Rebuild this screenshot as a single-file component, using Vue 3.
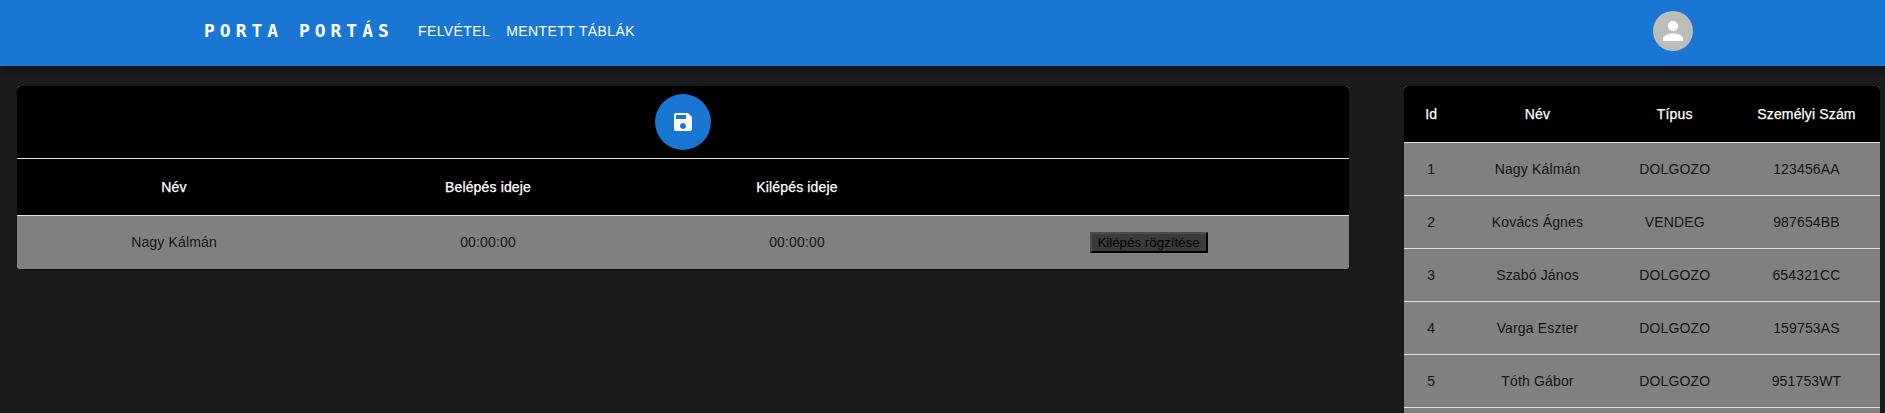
<script setup>
const pages = ['Felvétel', 'Mentett táblák']
const entries = [{ name: 'Nagy Kálmán', entered: '00:00:00', left: '00:00:00' }]
const people = [
  { id: 1, name: 'Nagy Kálmán', type: 'DOLGOZO', code: '123456AA' },
  { id: 2, name: 'Kovács Ágnes', type: 'VENDEG', code: '987654BB' },
  { id: 3, name: 'Szabó János', type: 'DOLGOZO', code: '654321CC' },
  { id: 4, name: 'Varga Eszter', type: 'DOLGOZO', code: '159753AS' },
  { id: 5, name: 'Tóth Gábor', type: 'DOLGOZO', code: '951753WT' },
]
</script>

<template>
  <div class="app">
    <header class="bar">
      <a class="brand">PORTA PORTÁS</a>
      <nav class="nav">
        <a v-for="p in pages" :key="p" class="link">{{ p }}</a>
      </nav>
      <button class="avatar" aria-label="Profil">
        <svg viewBox="0 0 24 24" width="30" height="30"><path d="M12 12c2.21 0 4-1.79 4-4s-1.79-4-4-4-4 1.79-4 4 1.79 4 4 4zm0 2c-2.67 0-8 1.34-8 4v2h16v-2c0-2.66-5.33-4-8-4z" /></svg>
      </button>
    </header>

    <main class="content">
      <section class="panel log">
        <div class="row tools">
          <button class="fab" aria-label="Mentés">
            <svg viewBox="0 0 24 24" width="24" height="24"><path d="M17 3H5c-1.11 0-2 .9-2 2v14c0 1.1.89 2 2 2h14c1.1 0 2-.9 2-2V7l-4-4zm-5 16c-1.66 0-3-1.34-3-3s1.34-3 3-3 3 1.34 3 3-1.34 3-3 3zm3-10H5V5h10v4z" /></svg>
          </button>
        </div>
        <div class="row head">
          <span>Név</span><span>Belépés ideje</span><span>Kilépés ideje</span><span></span>
        </div>
        <div v-for="e in entries" :key="e.name" class="row body">
          <span>{{ e.name }}</span><span>{{ e.entered }}</span><span>{{ e.left }}</span>
          <span><button class="leave">Kilépés rögzítése</button></span>
        </div>
      </section>

      <section class="panel people">
        <div class="row head">
          <span>Id</span><span>Név</span><span>Típus</span><span>Személyi Szám</span>
        </div>
        <div v-for="p in people" :key="p.id" class="row body">
          <span>{{ p.id }}</span><span>{{ p.name }}</span><span>{{ p.type }}</span><span>{{ p.code }}</span>
        </div>
        <div class="row body"></div>
      </section>
    </main>
  </div>
</template>

<style>
body {
  background: #1a1b1d;
  overflow: hidden;
}
</style>

<style scoped>
.app {
  height: 413px;
  overflow: hidden;
  background: #1a1b1d;
  font-family: "Liberation Sans", Arial, sans-serif;
  font-size: 14px;
}
.bar {
  display: flex;
  align-items: center;
  box-sizing: border-box;
  height: 66px;
  padding: 0 192px 4px 204px;
  background: #1976d2;
  color: #fff;
  box-shadow: 0 2px 4px -1px rgba(0, 0, 0, 0.2), 0 4px 5px rgba(0, 0, 0, 0.14), 0 1px 10px rgba(0, 0, 0, 0.12);
}
.brand {
  width: 214px;
  font: 700 18px/32px "DejaVu Sans Mono", monospace;
  letter-spacing: 4.98px;
  white-space: nowrap;
}
.nav {
  display: flex;
  flex: 1;
  gap: 16px;
}
.link {
  letter-spacing: 0.4px;
  text-transform: uppercase;
}
.avatar,
.fab {
  display: flex;
  align-items: center;
  justify-content: center;
  padding: 0;
  border: 0;
  border-radius: 50%;
}
.avatar {
  width: 40px;
  height: 40px;
  background: #bdbdbd;
}
.fab {
  width: 56px;
  height: 56px;
  background: #1976d2;
}
svg {
  fill: #fff;
}
.content {
  display: flex;
  align-items: flex-start;
  justify-content: space-between;
  padding: 20px 5px 0 17px;
}
.panel {
  overflow: hidden;
  border-radius: 4px;
  background: #fff;
  box-shadow: 0 2px 1px -1px rgba(0, 0, 0, 0.2), 0 1px 1px rgba(0, 0, 0, 0.14), 0 1px 3px rgba(0, 0, 0, 0.12);
}
.log {
  width: 1332px;
}
.people {
  width: 476px;
}
.row {
  display: grid;
  align-items: center;
  box-sizing: border-box;
  height: 53px;
  border-bottom: 1px solid #e0e0e0;
  letter-spacing: 0.15px;
  line-height: 20px;
  text-align: center;
}
.log .row {
  grid-template-columns: 314px 314px 304px 400px;
}
.people .row {
  grid-template-columns: 54.6px 157.8px 116.6px 147px;
}
.log .row.tools {
  display: flex;
  justify-content: center;
  height: 73px;
  background: #000;
}
.head {
  height: 57px;
  background: #000;
  color: #fff;
  -webkit-text-stroke: 0.25px #fff;
}
.body {
  background: #808080;
  color: rgba(0, 0, 0, 0.87);
}
.log .body {
  border-bottom-color: #808080;
}
.leave {
  display: block;
  box-sizing: border-box;
  width: 118px;
  height: 21px;
  margin: 0 auto;
  padding: 0 1px 0 0;
  border: 2px outset #000;
  border-color: #4c4c4c #000 #000 #4c4c4c;
  background: #3b3b3b;
  color: #000;
  font: 13.333px/17px "Liberation Sans", Arial, sans-serif;
  white-space: nowrap;
}
</style>
